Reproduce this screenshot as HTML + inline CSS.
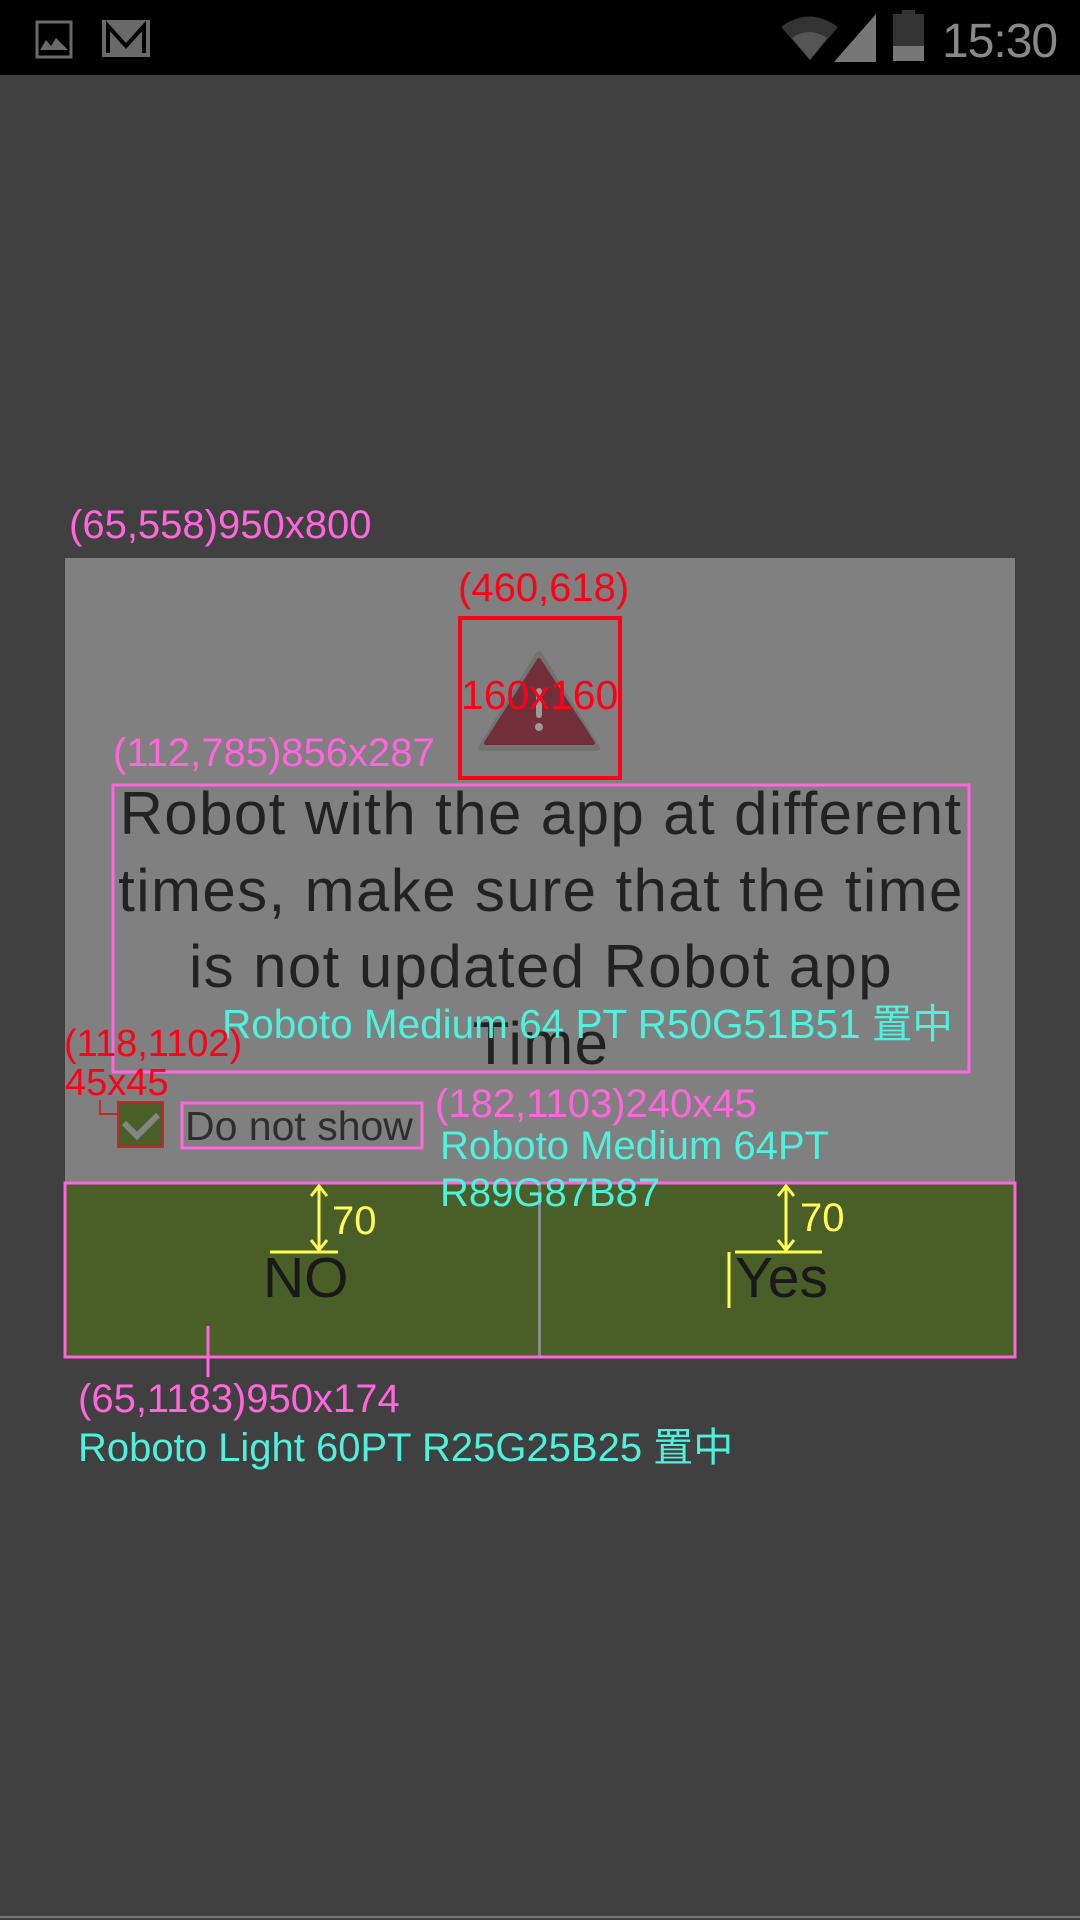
<!DOCTYPE html>
<html><head><meta charset="utf-8"><style>
html,body{margin:0;padding:0}
body{width:1080px;height:1920px;background:#404040;position:relative;overflow:hidden;font-family:"Liberation Sans","Noto Sans CJK SC",sans-serif}
.a{position:absolute;white-space:nowrap;line-height:1}
.mg{color:#ff66dd}.cy{color:#4ff0dc}.rd{color:#ff0019}.yl{color:#ffff55}
</style></head><body>
<div style="position:absolute;left:0;top:0;width:1080px;height:75px;background:#000"></div>
<svg style="position:absolute;left:0;top:0" width="1080" height="75">
  <rect x="37" y="22" width="34" height="35" fill="none" stroke="#6a6a6a" stroke-width="3"/>
  <path d="M40 50 L46 40 L51 46 L56 38 L68 50 Z" fill="#6a6a6a"/>
  <rect x="102" y="20" width="48" height="37" fill="#6a6a6a"/>
  <path d="M108 53 V26 L126 46 L144 26 V53" fill="none" stroke="#000" stroke-width="4"/>
  <path d="M781 27 Q809 6 838 27 L810 60 Z" fill="#333"/>
  <path d="M792 38 Q809 26 827 38 L810 60 Z" fill="#555"/>
  <path d="M834 62 L876 14 V62 Z" fill="#777"/>
  <rect x="893" y="14" width="31" height="47" fill="#333"/>
  <rect x="902" y="10" width="13" height="5" fill="#333"/>
  <rect x="893" y="46" width="31" height="15" fill="#777"/>
</svg>
<div class="a" style="left:942px;top:18px;font-size:48px;color:#888;letter-spacing:-1px">15:30</div>

<div style="position:absolute;left:65px;top:558px;width:950px;height:625px;background:#808080"></div>
<div style="position:absolute;left:65px;top:1183px;width:950px;height:174px;background:#4a5e27"></div>
<div style="position:absolute;left:538px;top:1183px;width:3px;height:174px;background:#8a8a8a"></div>

<svg style="position:absolute;left:0;top:0" width="1080" height="1400">
  <path d="M539 654 L597 748 L481 748 Z" fill="#727272" stroke="#727272" stroke-width="6" stroke-linejoin="round"/>
  <path d="M539 660 L593 743 L486 743 Z" fill="#722f3a" stroke="#722f3a" stroke-width="4" stroke-linejoin="round"/>
  <rect x="536" y="688" width="6" height="30" rx="3" fill="#9a9a9a"/>
  <circle cx="539" cy="727" r="4" fill="#9a9a9a"/>
  <rect x="460" y="618" width="160" height="160" fill="none" stroke="#ff0019" stroke-width="4"/>
  <rect x="113" y="785" width="856" height="287" fill="none" stroke="#ff66dd" stroke-width="3"/>
  <rect x="118" y="1102" width="45" height="45" fill="#4a5e27" stroke="#c82828" stroke-width="2"/>
  <path d="M124 1123 L137 1136 L158 1115" fill="none" stroke="#858585" stroke-width="6"/>
  <path d="M100 1100 V1114 H118" fill="none" stroke="#c82828" stroke-width="2"/>
  <rect x="182" y="1103" width="240" height="45" fill="none" stroke="#ff66dd" stroke-width="3"/>
  <rect x="65" y="1183" width="950" height="174" fill="none" stroke="#ff66dd" stroke-width="3"/>
  <line x1="208" y1="1326" x2="208" y2="1377" stroke="#ff66dd" stroke-width="3"/>
  <g stroke="#ffff55" stroke-width="3" fill="none">
    <line x1="319" y1="1186" x2="319" y2="1250"/>
    <path d="M311 1196 L319 1186 L327 1196 M311 1240 L319 1250 L327 1240"/>
    <line x1="270" y1="1252" x2="338" y2="1252"/>
    <line x1="786" y1="1186" x2="786" y2="1250"/>
    <path d="M778 1196 L786 1186 L794 1196 M778 1240 L786 1250 L794 1240"/>
    <line x1="735" y1="1252" x2="822" y2="1252"/>
    <line x1="729" y1="1252" x2="729" y2="1308"/>
  </g>
</svg>

<div style="position:absolute;left:113px;top:776px;width:856px;text-align:center;font-size:60px;line-height:76.5px;color:#222;letter-spacing:1.4px">Robot with the app at different<br>times, make sure that the time<br>is not updated Robot app<br>Time</div>

<div class="a" style="left:185px;top:1106px;font-size:41px;color:#2e2e2e">Do not show</div>
<div class="a" style="left:263px;top:1250px;font-size:57px;color:#191919">NO</div>
<div class="a" style="left:735px;top:1250px;font-size:57px;color:#191919">Yes</div>

<div class="a mg" style="left:69px;top:505px;font-size:40px">(65,558)950x800</div>
<div class="a rd" style="left:458px;top:568px;font-size:40px">(460,618)</div>
<div class="a rd" style="left:461px;top:675px;font-size:41px">160x160</div>
<div class="a mg" style="left:113px;top:733px;font-size:40px">(112,785)856x287</div>
<div class="a cy" style="left:222px;top:1004px;font-size:40.5px">Roboto Medium 64 PT R50G51B51 置中</div>
<div class="a rd" style="left:64px;top:1025px;font-size:38px">(118,1102)</div>
<div class="a rd" style="left:65px;top:1064px;font-size:38px">45x45</div>
<div class="a mg" style="left:435px;top:1084px;font-size:40px">(182,1103)240x45</div>
<div class="a cy" style="left:440px;top:1126px;font-size:40px">Roboto Medium 64PT</div>
<div class="a cy" style="left:440px;top:1173px;font-size:40px">R89G87B87</div>
<div class="a yl" style="left:332px;top:1201px;font-size:40px">70</div>
<div class="a yl" style="left:800px;top:1198px;font-size:40px">70</div>
<div class="a mg" style="left:78px;top:1379px;font-size:40px">(65,1183)950x174</div>
<div class="a cy" style="left:78px;top:1428px;font-size:40px">Roboto Light 60PT R25G25B25 置中</div>

<div style="position:absolute;left:0;top:1916px;width:1080px;height:2px;background:#777"></div>
</body></html>
